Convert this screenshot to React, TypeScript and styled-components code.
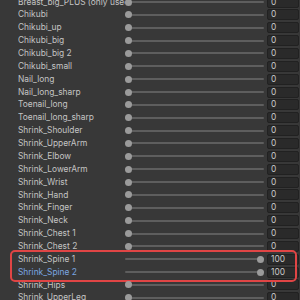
import React from "react";
import styled, { createGlobalStyle } from "styled-components";

type Shape = { name: string; value: number; override?: boolean };

const shapes: Shape[] = [
  { name: "Breast_big_PLUS (only used for big breasts)", value: 0 },
  { name: "Chikubi", value: 0 },
  { name: "Chikubi_up", value: 0 },
  { name: "Chikubi_big", value: 0 },
  { name: "Chikubi_big 2", value: 0 },
  { name: "Chikubi_small", value: 0 },
  { name: "Nail_long", value: 0 },
  { name: "Nail_long_sharp", value: 0 },
  { name: "Toenail_long", value: 0 },
  { name: "Toenail_long_sharp", value: 0 },
  { name: "Shrink_Shoulder", value: 0 },
  { name: "Shrink_UpperArm", value: 0 },
  { name: "Shrink_Elbow", value: 0 },
  { name: "Shrink_LowerArm", value: 0 },
  { name: "Shrink_Wrist", value: 0 },
  { name: "Shrink_Hand", value: 0 },
  { name: "Shrink_Finger", value: 0 },
  { name: "Shrink_Neck", value: 0 },
  { name: "Shrink_Chest 1", value: 0 },
  { name: "Shrink_Chest 2", value: 0 },
];

// the two rows outlined in red
const marked: Shape[] = [
  { name: "Shrink_Spine 1", value: 100 },
  { name: "Shrink_Spine 2", value: 100, override: true },
];

const rest: Shape[] = [
  { name: "Shrink_Hips", value: 0 },
  { name: "Shrink_UpperLeg", value: 0 },
];

const KNOB = 7;

function ShapeRow({ shape }: { shape: Shape }) {
  const v = shape.value;
  return (
    <Row>
      <Label $override={shape.override}>{shape.name}</Label>
      <Slider>
        <Track />
        <Knob style={{ left: `calc(${v}% - ${(v * KNOB) / 100}px)` }} />
      </Slider>
      <Field>{v}</Field>
    </Row>
  );
}

export default function App() {
  return (
    <>
      <Global />
      <Inspector>
        <List>
          {shapes.map((s) => (
            <ShapeRow key={s.name} shape={s} />
          ))}
          <Highlight>
            {marked.map((s) => (
              <ShapeRow key={s.name} shape={s} />
            ))}
          </Highlight>
          {rest.map((s) => (
            <ShapeRow key={s.name} shape={s} />
          ))}
        </List>
      </Inspector>
    </>
  );
}

const Global = createGlobalStyle`
  html, body {
    margin: 0;
    padding: 0;
    background: #383838;
  }
`;

const Inspector = styled.div`
  width: 300px;
  height: 300px;
  overflow: hidden;
  background: #383838;
  font-family: Inter, "Noto Sans", sans-serif;
  font-size: 8.4px;
  color: #c4c4c4;
`;

const List = styled.div`
  margin-top: -4.4px;
  display: flex;
  flex-direction: column;
`;

const Row = styled.div`
  height: 12.87px;
  display: grid;
  grid-template-columns: 107px 1fr 32px;
  align-items: center;
  padding: 0 1px 0 18px;
`;

const Label = styled.div<{ $override?: boolean }>`
  white-space: nowrap;
  overflow: hidden;
  line-height: 12.87px;
  color: ${({ $override }) => ($override ? "#7aa6e0" : "#c4c4c4")};
`;

const Slider = styled.div`
  position: relative;
  height: 100%;
  margin-right: 3px;
`;

const Track = styled.div`
  position: absolute;
  left: 0;
  right: 0;
  top: 50%;
  height: 2px;
  margin-top: -1px;
  background: #5e5e5e;
  border-radius: 1px;
`;

const Knob = styled.div`
  position: absolute;
  top: 50%;
  width: ${KNOB}px;
  height: ${KNOB}px;
  margin-top: -${KNOB / 2}px;
  border-radius: 50%;
  background: #9b9b9b;
`;

const Field = styled.div`
  height: 11px;
  box-sizing: border-box;
  background: #2a2a2a;
  border: 1px solid #212121;
  border-radius: 2px;
  padding-left: 3px;
  line-height: 9px;
  color: #c8c8c8;
  white-space: nowrap;
`;

const Highlight = styled.div`
  position: relative;
  &::after {
    content: "";
    position: absolute;
    left: 10px;
    right: 3px;
    top: -3px;
    bottom: -3px;
    border: 2px solid #e04545;
    border-radius: 5px;
    pointer-events: none;
  }
`;
